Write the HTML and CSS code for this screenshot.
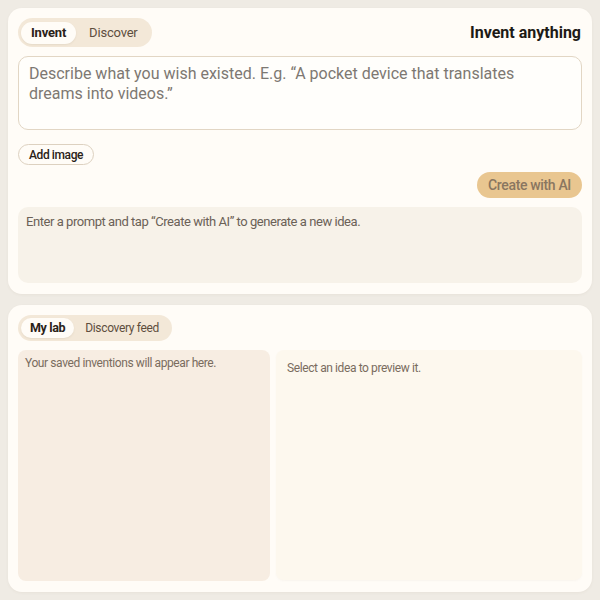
FILE: index.html
```html
<!DOCTYPE html>
<html>
<head>
<meta charset="utf-8">
<link rel="stylesheet" href="styles.css">
</head>
<body>
<div class="page">
  <section class="card card-top">
    <div class="head">
      <div class="tabs">
        <span class="tab active">Invent</span>
        <span class="tab">Discover</span>
      </div>
      <h1 class="title">Invent anything</h1>
    </div>
    <textarea class="prompt" placeholder="Describe what you wish existed. E.g. “A pocket device that translates dreams into videos.”"></textarea>
    <div class="row-add"><button class="btn-add">Add image</button></div>
    <div class="row-create"><button class="btn-create">Create with AI</button></div>
    <div class="result">Enter a prompt and tap “Create with AI” to generate a new idea.</div>
  </section>
  <section class="card card-bottom">
    <div class="tabs tabs-lab">
      <span class="tab active">My lab</span>
      <span class="tab">Discovery feed</span>
    </div>
    <div class="panels">
      <div class="panel panel-list">Your saved inventions will appear here.</div>
      <div class="panel panel-preview">Select an idea to preview it.</div>
    </div>
  </section>
</div>
</body>
</html>
```
FILE: styles.css
```css
* { box-sizing: border-box; }
html, body { margin: 0; padding: 0; }
body {
  background: #efebe4;
  font-family: Roboto, "Noto Sans", sans-serif;
  color: #2a2520;
  width: 600px;
  height: 600px;
  overflow: hidden;
}
.page {
  padding: 8px;
  display: flex;
  flex-direction: column;
  gap: 11px;
}
.card {
  background: #fffcf7;
  border-radius: 14px;
  padding: 10px 10px 11px;
  box-shadow: 0 1px 3px rgba(120, 100, 70, 0.06);
}
.card-top { height: 286px; display: flex; flex-direction: column; }
.card-bottom { height: 287px; display: flex; flex-direction: column; }
.head {
  display: flex;
  justify-content: space-between;
  align-items: center;
  height: 29px;
}
.tabs {
  display: inline-flex;
  background: #f3e8d8;
  border-radius: 999px;
  padding: 4px 3px;
  height: 29px;
  align-items: center;
}
.tab {
  font-size: 13px;
  font-weight: 400;
  color: #5e4e3e;
  padding: 0 11px 0 13px;
  height: 22px;
  line-height: 22px;
  border-radius: 999px;
  letter-spacing: -0.2px;
}
.tab.active {
  background: #fffcf7;
  color: #2a2218;
  font-weight: 700;
  padding: 0 10px;
  box-shadow: 0 1px 2px rgba(120, 100, 70, 0.1);
}
.title {
  margin: 0;
  font-size: 16px;
  font-weight: 700;
  color: #1d1a16;
  padding-right: 1px;
}
.prompt {
  margin-top: 9px;
  height: 74px;
  width: 100%;
  resize: none;
  border: 1px solid #e2d6c4;
  border-radius: 10px;
  background: #fffefb;
  font-family: Roboto, "Noto Sans", sans-serif;
  font-size: 16px;
  line-height: 20px;
  padding: 7px 10px;
  color: #2a2520;
  outline: none;
}
.prompt::placeholder { color: #7d7872; }
.row-add { margin-top: 14px; display: flex; }
.btn-add {
  font-family: Roboto, "Noto Sans", sans-serif;
  font-size: 12px;
  font-weight: 500;
  color: #2a2218;
  background: #fffcf7;
  border: 1px solid #ddd1c0;
  border-radius: 999px;
  height: 21px;
  padding: 0 10px;
  letter-spacing: -0.4px;
}
.row-create { margin-top: 7px; display: flex; justify-content: flex-end; }
.btn-create {
  font-family: Roboto, "Noto Sans", sans-serif;
  font-size: 14px;
  font-weight: 500;
  color: #8a7660;
  background: #e9c690;
  border: none;
  border-radius: 999px;
  height: 26px;
  padding: 0 11px;
  width: 105px;
  letter-spacing: -0.35px;
}
.result {
  margin-top: 9px;
  flex: 1;
  background: #f7f2e9;
  border-radius: 10px;
  padding: 7px 8px;
  font-size: 13px;
  color: #6b6157;
  line-height: 16px;
  letter-spacing: -0.45px;
}
.tabs-lab { align-self: flex-start; height: 26px; padding: 3px 3px; }
.tabs-lab .tab { height: 20px; line-height: 20px; font-size: 12px; padding: 0 10px 0 11px; letter-spacing: -0.35px; }
.tabs-lab .tab.active { padding: 0 9px; font-size: 12.5px; }
.panels {
  margin-top: 9px;
  flex: 1;
  display: grid;
  grid-template-columns: 252px 1fr;
  gap: 6px;
}
.panel {
  border-radius: 8px;
  font-size: 12px;
  line-height: 16px;
  color: #7a6c5e;
  letter-spacing: -0.4px;
}
.panel-list {
  background: #f7ede2;
  padding: 5px 7px;
}
.panel-preview {
  background: #fdf8ee;
  padding: 10px 11px;
  margin-bottom: 1px;
  box-shadow: 0 1px 2px rgba(150, 130, 100, 0.06);
}
```
